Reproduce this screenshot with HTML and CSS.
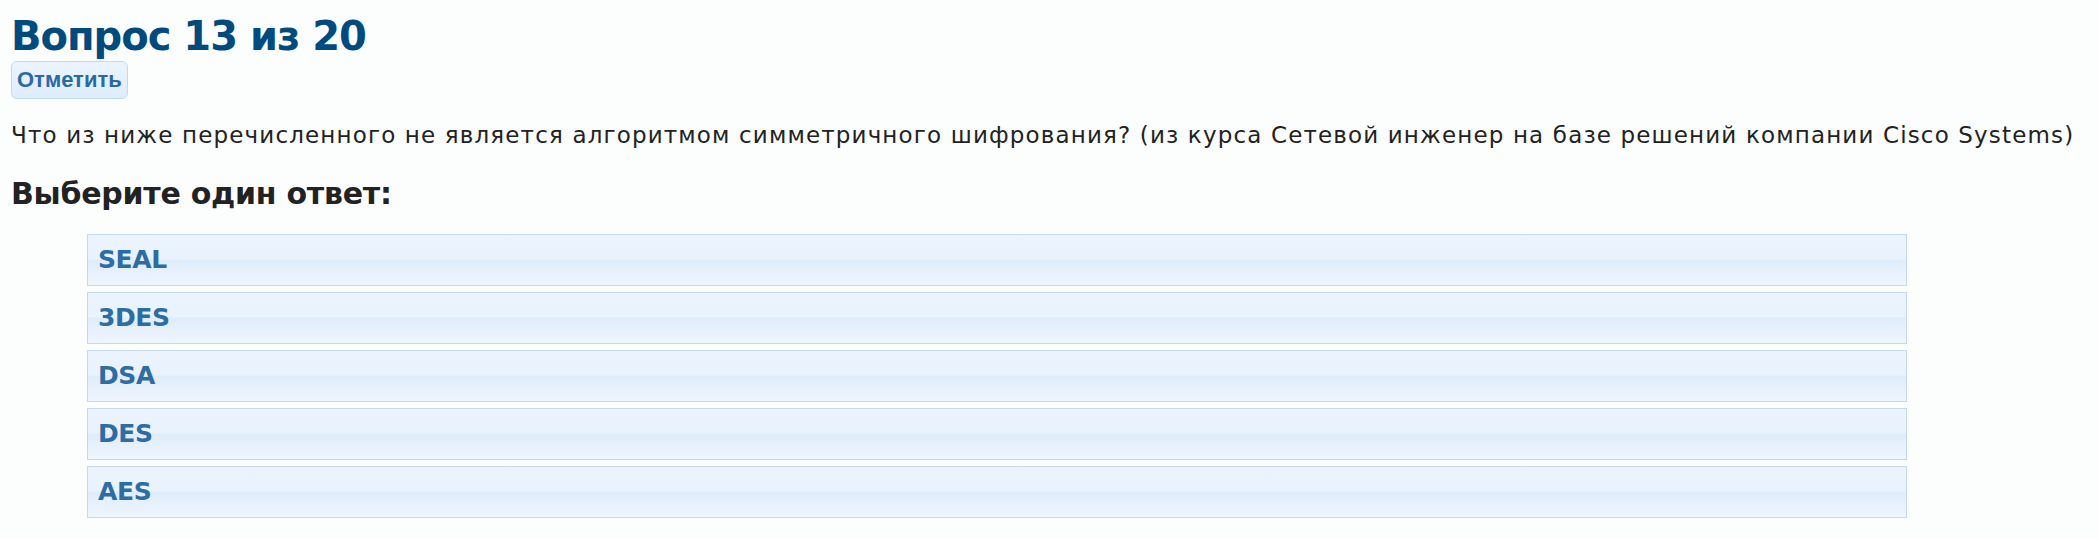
FILE: index.html
```html
<!DOCTYPE html>
<html lang="ru">
<head>
  <meta charset="UTF-8">
  <meta name="viewport" content="width=device-width, initial-scale=1.0">
  <title>Вопрос 13 из 20</title>
  <link rel="stylesheet" href="styles.css">
</head>
<body>
  <div class="quiz">
    <h1 class="quiz-title">Вопрос 13 из 20</h1>
    <button class="mark-button" type="button">Отметить</button>

    <p class="question">Что из ниже перечисленного не является алгоритмом симметричного шифрования? (из курса Сетевой инженер на базе решений компании Cisco Systems)</p>

    <h2 class="answer-title">Выберите один ответ:</h2>

    <!-- варианты ответа -->
    <ul class="answers">
      <li class="answer">SEAL</li>
      <li class="answer">3DES</li>
      <li class="answer">DSA</li>
      <li class="answer">DES</li>
      <li class="answer">AES</li>
    </ul>
  </div>
</body>
</html>
```

FILE: styles.css
```css
body {
  margin: 0;
  padding: 13px 11px 0;
  background: #fcfdfd;
  font-family: 'DejaVu Sans', 'Open Sans', sans-serif;
  color: #222222;
}

.quiz {
  display: flex;
  flex-direction: column;
  align-items: flex-start;
}

.quiz-title {
  margin: 0;
  font-size: 40px;
  line-height: 46px;
  font-weight: bold;
  color: #004a7d;
  letter-spacing: -1px;
}

.mark-button {
  margin-top: 2px;
  padding: 6px 5px;
  font-family: 'Liberation Sans', Arial, sans-serif;
  font-size: 22px;
  line-height: 24px;
  font-weight: bold;
  color: #2c6aa2;
  background: linear-gradient(#eaf4fe, #deedfc);
  border: 1px solid #c3d9ee;
  border-radius: 6px;
  cursor: pointer;
}

.question {
  margin: 21px 0 0;
  font-size: 23px;
  line-height: 30px;
  letter-spacing: 1.15px;
}

.answer-title {
  margin: 26px 0 0;
  font-size: 30px;
  line-height: 36px;
  font-weight: bold;
  letter-spacing: -0.25px;
}

.answers {
  list-style: none;
  align-self: stretch;
  margin: 22px 180px 0 76px;
  padding: 0;
  display: flex;
  flex-direction: column;
  gap: 6px;
}

.answer {
  padding: 0 10px;
  height: 50px;
  line-height: 50px;
  font-size: 25px;
  font-weight: bold;
  color: #2e6ca4;
  letter-spacing: -0.4px;
  border: 1px solid #c4d9ec;
  /* глянцевая полоса посередине */
  background: linear-gradient(#ebf4fe 0%, #e9f3fd 48%, #deecfb 50%, #e6f0fc 70%, #eef6fe 100%);
  cursor: pointer;
}
```
